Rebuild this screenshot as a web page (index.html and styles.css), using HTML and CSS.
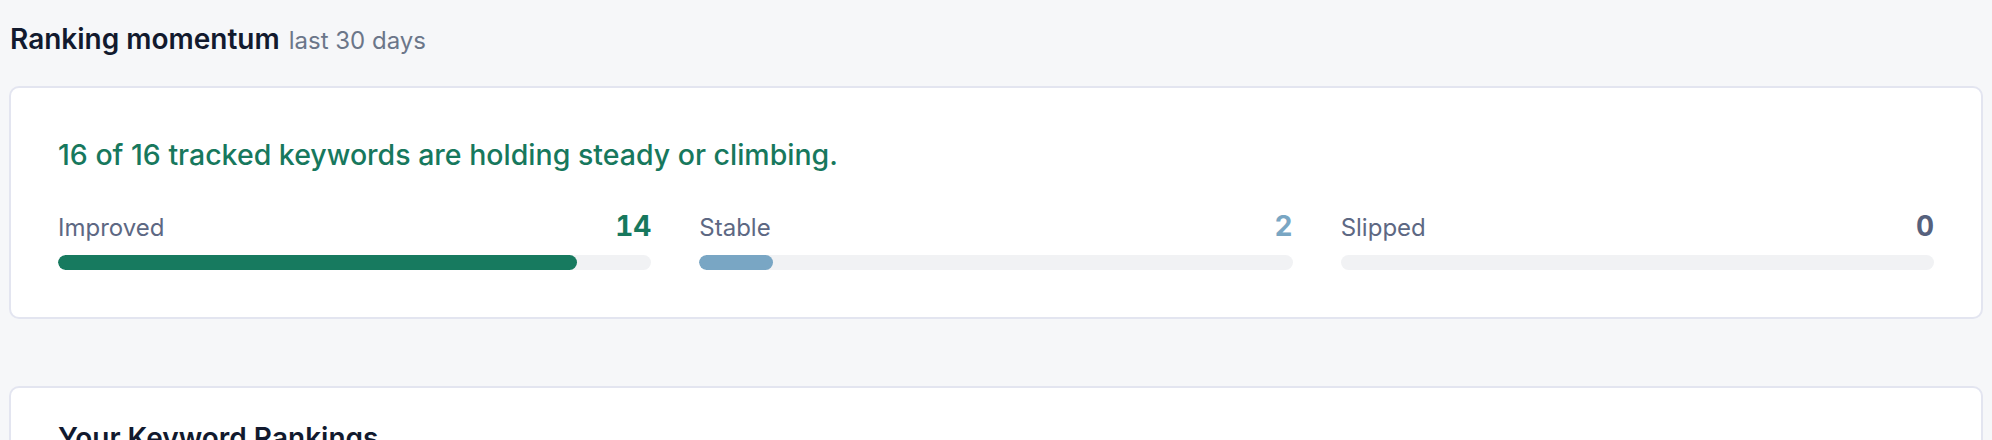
FILE: index.html
```html
<!DOCTYPE html>
<html lang="en">
<head>
  <meta charset="UTF-8">
  <title>Ranking momentum</title>
  <link rel="stylesheet" href="styles.css">
</head>
<body>
  <h2 class="section-title">Ranking momentum<span class="section-sub">last 30 days</span></h2>

  <div class="card momentum">
    <p class="summary">16 of 16 tracked keywords are holding steady or climbing.</p>

    <div class="stats">
      <div class="stat">
        <div class="stat-head">
          <span class="stat-label">Improved</span>
          <span class="stat-value improved">14</span>
        </div>
        <div class="track"><div class="fill improved" style="width: 87.5%"></div></div>
      </div>

      <div class="stat">
        <div class="stat-head">
          <span class="stat-label">Stable</span>
          <span class="stat-value stable">2</span>
        </div>
        <div class="track"><div class="fill stable" style="width: 12.5%"></div></div>
      </div>

      <div class="stat">
        <div class="stat-head">
          <span class="stat-label">Slipped</span>
          <span class="stat-value slipped">0</span>
        </div>
        <div class="track"><div class="fill slipped" style="width: 0%"></div></div>
      </div>
    </div>
  </div>

  <div class="card rankings">
    <h3 class="card-title">Your Keyword Rankings</h3>
  </div>
</body>
</html>
```

FILE: styles.css
```css
body {
  font-family: 'Inter', 'Liberation Sans', sans-serif;
  margin: 0;
  padding: 20px 9px;
  background: #f6f7f9;
  color: #121a2e;
}

.section-title {
  font-size: 28px;
  font-weight: 600;
  line-height: 39px;
  margin: 0 0 26px 1px;
  color: #121a2e;
}

.section-sub {
  font-size: 24px;
  font-weight: 400;
  color: #6b7689;
  margin-left: 9px;
}

.card {
  background: #fff;
  border: 2px solid #e3e5f0;
  border-radius: 10px;
  padding: 47px;
}

.summary {
  margin: 0 0 36px;
  font-size: 28.5px;
  font-weight: 500;
  line-height: 39px;
  color: #17785d;
}

.stats {
  display: grid;
  grid-template-columns: repeat(3, 1fr);
  gap: 48px;
}

.stat-head {
  display: flex;
  justify-content: space-between;
  align-items: baseline;
  height: 32px;
  margin-bottom: 13px;
}

.stat-label {
  font-size: 24px;
  line-height: 30px;
  color: #5d6883;
}

.stat-value {
  font-size: 28px;
  line-height: 32px;
  font-weight: 700;
  font-variant-numeric: tabular-nums;
}

.stat-value.improved { color: #17785d; }
.stat-value.stable { color: #79a6c3; }
.stat-value.slipped { color: #56617d; }

.track {
  height: 15px;
  border-radius: 8px;
  background: #f1f2f4;
  overflow: hidden;
}

.fill {
  height: 100%;
  border-radius: 8px;
}

.fill.improved { background: #177a5f; }
.fill.stable { background: #79a6c4; }
.fill.slipped { background: #d9534f; }

.rankings {
  margin-top: 67px;
  padding-top: 31px;
}

.card-title {
  margin: 0;
  font-size: 28px;
  line-height: 39px;
  font-weight: 600;
}
```
